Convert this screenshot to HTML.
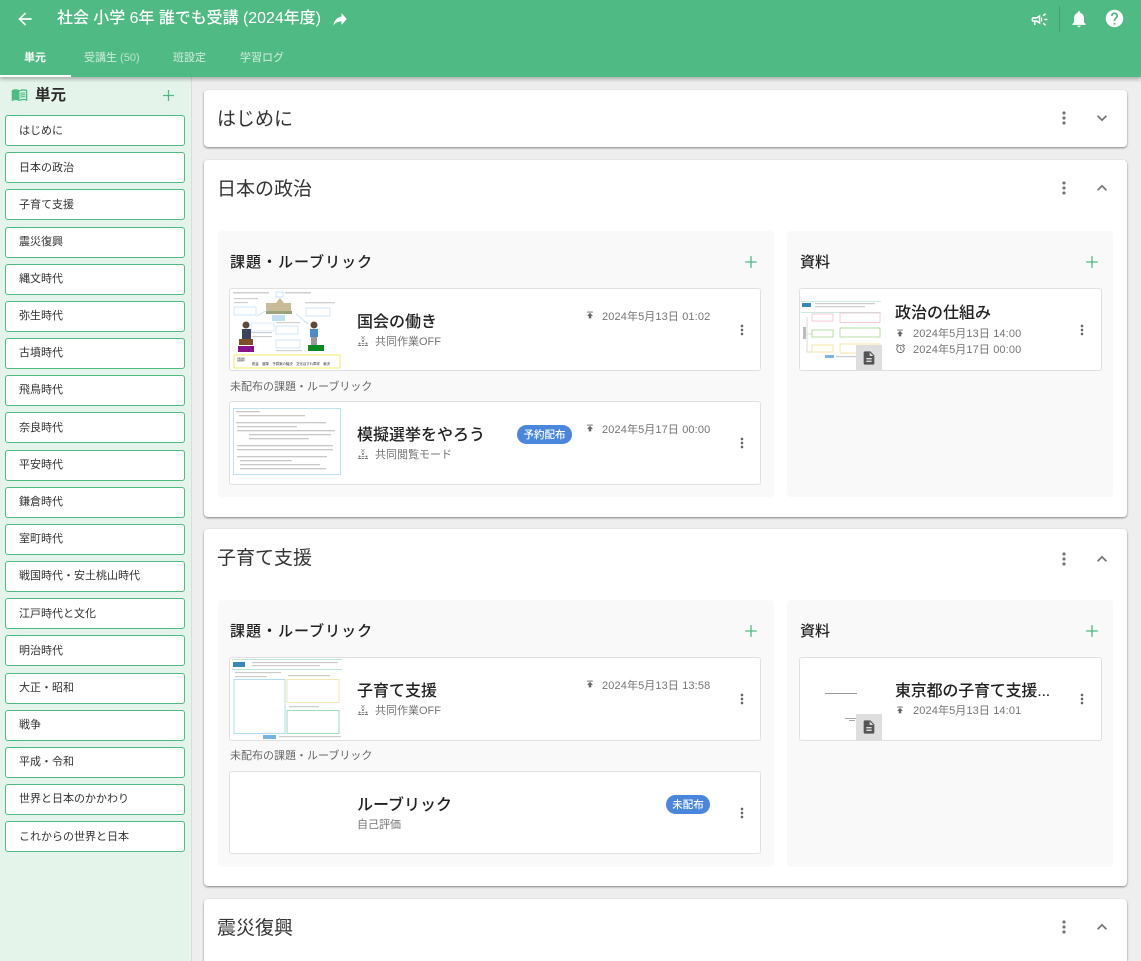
<!DOCTYPE html>
<html lang="ja"><head><meta charset="utf-8"><title>単元</title>
<style>
*{box-sizing:border-box}
html,body{margin:0;padding:0;width:1141px;height:961px;overflow:hidden}
body{position:relative;background:#eeeeee;font-family:"Liberation Sans","Noto Sans CJK JP",sans-serif;color:rgba(0,0,0,.87)}
.a{position:absolute;white-space:nowrap}
.hdr{left:0;top:0;width:1141px;height:77px;background:#4fba83;box-shadow:0 2px 4px rgba(0,0,0,.3);z-index:5}
.tab{top:51px;font-size:11px;line-height:14px;color:rgba(255,255,255,.62);font-weight:500}
.side{left:0;top:77px;width:192px;height:884px;background:#e4f4ea;border-right:1px solid #dcdcdc}
.si{left:5px;width:180px;height:31px;background:#fff;border:1px solid #4fba83;border-radius:3px;font-size:11px;line-height:30px;padding-left:13px;color:#333}
.u{line-height:28px}
.card{left:204px;width:923px;background:#fff;border-radius:4px;box-shadow:0 1px 2px rgba(0,0,0,.45)}
.ct{left:217px;margin-top:2px;font-size:19px;line-height:26px;color:#333}
.panel{background:#f9f9f9;border-radius:4px}
.st{margin-top:1px;font-size:15px;font-weight:500;line-height:20px;letter-spacing:1px;color:#222}
.item{background:#fff;border:1px solid #e0e0e0;border-radius:3px;overflow:hidden}
.it{margin-top:2px;font-size:16px;font-weight:500;line-height:22px;color:#222}
.sub{margin-top:1px;font-size:11px;line-height:14px;color:#757575}
.d{letter-spacing:.12px}
.lbl{left:230px;margin-top:1px;font-size:11px;line-height:14px;color:#666}
.badge{background:#4a86dc;color:#fff;border-radius:10px;font-size:10.5px;font-weight:500;text-align:center;line-height:20px;height:19px}
svg.i{position:absolute;display:block}
.thumb{position:absolute}
.docbg{position:absolute;background:#dedede;width:26px;height:26px}
text{font-family:"Liberation Sans","Noto Sans CJK JP",sans-serif}
</style></head><body>
<svg width="0" height="0" style="position:absolute"><defs>
<symbol id="back" viewBox="0 0 24 24"><path d="M20 11H7.830l5.590-5.590L12 4l-8 8 8 8 1.410-1.410L7.830 13H20v-2z"/></symbol>
<symbol id="share" viewBox="0 0 24 24"><path d="M14 9V5l7 7-7 7v-4.100c-5 0-8.500 1.600-11 5.100 1-5 4-10 11-11z"/></symbol>
<symbol id="camp" viewBox="0 0 24 24"><path d="M18 11v2h4v-2h-4zm-2 6.610c.96.71 2.210 1.650 3.200 2.390.4-.53.8-1.070 1.200-1.600-.99-.74-2.240-1.680-3.200-2.400-.4.54-.8 1.080-1.200 1.610zM20.400 5.600c-.4-.53-.8-1.070-1.200-1.600-.99.74-2.240 1.680-3.200 2.400.4.53.8 1.070 1.200 1.600.96-.72 2.210-1.650 3.200-2.400zM4 9c-1.100 0-2 .9-2 2v2c0 1.100.9 2 2 2h1v4h2v-4h1l5 3V6L8 9H4zm5.030 1.710L11 9.530v4.940l-1.970-1.180-.48-.29H4v-2h4.550l.48-.29zM15.500 12c0-1.330-.58-2.530-1.500-3.350v6.690c.92-.81 1.500-2.010 1.500-3.340z"/></symbol>
<symbol id="bell" viewBox="0 0 24 24"><path d="M12 22c1.100 0 2-.9 2-2h-4c0 1.100.89 2 2 2zm6-6v-5c0-3.070-1.640-5.640-4.500-6.320V4c0-.83-.67-1.500-1.500-1.500s-1.500.67-1.500 1.500v.68C7.630 5.360 6 7.920 6 11v5l-2 2v1h16v-1l-2-2z"/></symbol>
<symbol id="help" viewBox="0 0 24 24"><path d="M12 2C6.480 2 2 6.480 2 12s4.480 10 10 10 10-4.480 10-10S17.520 2 12 2zm1 17h-2v-2h2v2zm2.070-7.750l-.9.92C13.450 12.900 13 13.500 13 15h-2v-.5c0-1.100.45-2.100 1.170-2.830l1.240-1.260c.37-.36.59-.86.59-1.410 0-1.100-.9-2-2-2s-2 .9-2 2H8c0-2.210 1.790-4 4-4s4 1.790 4 4c0 .88-.36 1.680-.93 2.250z"/></symbol>
<symbol id="more" viewBox="0 0 24 24"><path d="M12 8c1.100 0 2-.9 2-2s-.9-2-2-2-2 .9-2 2 .9 2 2 2zm0 2c-1.100 0-2 .9-2 2s.9 2 2 2 2-.9 2-2-.9-2-2-2zm0 6c-1.100 0-2 .9-2 2s.9 2 2 2 2-.9 2-2-.9-2-2-2z"/></symbol>
<symbol id="down" viewBox="0 0 24 24"><path d="M16.590 8.590L12 13.170 7.410 8.590 6 10l6 6 6-6z"/></symbol>
<symbol id="up" viewBox="0 0 24 24"><path d="M12 8l-6 6 1.410 1.410L12 10.830l4.590 4.580L18 14z"/></symbol>
<symbol id="add" viewBox="0 0 24 24"><path d="M19 12.800h-6.200V19h-1.600v-6.200H5v-1.600h6.200V5h1.600v6.200H19z"/></symbol>
<symbol id="pub" viewBox="0 0 24 24"><path d="M5 4v2h14V4H5zm0 10h4v6h6v-6h4l-7-7-7 7z"/></symbol>
<symbol id="alarm" viewBox="0 0 24 24"><path d="M22 5.720l-4.600-3.860-1.290 1.530 4.600 3.860L22 5.720zM7.880 3.390L6.600 1.860 2 5.710l1.290 1.530 4.590-3.850zM12.500 8H11v6l4.750 2.850.75-1.230-4-2.370V8zM12 4c-4.970 0-9 4.030-9 9s4.020 9 9 9c4.970 0 9-4.030 9-9s-4.030-9-9-9zm0 16c-3.870 0-7-3.130-7-7s3.130-7 7-7 7 3.130 7 7-3.130 7-7 7z"/></symbol>
<symbol id="doc" viewBox="0 0 24 24"><path d="M14 2H6c-1.100 0-1.990.9-1.990 2L4 20c0 1.100.89 2 1.990 2H18c1.100 0 2-.9 2-2V8l-6-6zm2 16H8v-2h8v2zm0-4H8v-2h8v2zm-3-5V3.500L18.500 9H13z"/></symbol>
<symbol id="book" viewBox="0 0 24 24"><path d="M21 5c-1.110-.35-2.330-.5-3.500-.5-1.950 0-4.050.4-5.500 1.500-1.450-1.100-3.550-1.500-5.500-1.500S2.450 4.900 1 6v14.650c0 .25.25.5.5.5.1 0 .15-.05.25-.05C3.100 20.450 5.050 20 6.500 20c1.950 0 4.050.4 5.500 1.500 1.350-.85 3.800-1.500 5.500-1.500 1.650 0 3.350.3 4.750 1.050.1.05.15.05.25.05.25 0 .5-.25.5-.5V6c-.6-.45-1.250-.75-2-1zm0 13.500c-1.100-.35-2.300-.5-3.500-.5-1.700 0-4.150.65-5.500 1.500V8c1.350-.85 3.800-1.500 5.500-1.500 1.200 0 2.400.15 3.500.5v11.500zM17.500 10.500c.88 0 1.730.09 2.500.26V9.240c-.79-.15-1.640-.24-2.500-.24-1.700 0-3.240.29-4.500.83v1.660c1.130-.64 2.700-.99 4.500-.99zM13 12.490v1.660c1.130-.64 2.700-.99 4.500-.99.88 0 1.730.09 2.500.26V11.900c-.79-.15-1.640-.24-2.500-.24-1.700 0-3.240.3-4.500.83zM17.500 14.330c-1.700 0-3.240.29-4.500.83v1.660c1.130-.64 2.700-.99 4.500-.99.88 0 1.730.09 2.500.26v-1.520c-.79-.16-1.640-.24-2.500-.24z"/></symbol>
<symbol id="grp" viewBox="0 0 24 24"><path d="M9 2l3 2.500L15 2h1.500l-3.700 3.200V6l3.700 3H15l-3-2.500L9 9H7.500l3.700-3v-.8L7.500 2zM12 10a2 2 0 1 1 0 4 2 2 0 0 1 0-4zM5 15a2 2 0 1 1 0 4 2 2 0 0 1 0-4zM19 15a2 2 0 1 1 0 4 2 2 0 0 1 0-4zM2 20h6v2H2zM9 16h6v1.500H9zM9.500 20h5v2h-5zM16 20h6v2h-6z"/></symbol>
</defs></svg>

<div class="a hdr"></div>
<div style="position:absolute;left:0;top:0;width:1141px;height:77px;z-index:6">
<svg class="i" style="left:15px;top:9px;fill:#fff" width="20" height="20"><use href="#back"/></svg>
<div class="a" style="left:57px;top:8px;font-size:15.95px;font-weight:500;line-height:22px;color:#fff">社会 小学 6年 誰でも受講 (2024年度)</div>
<svg class="i" style="left:331px;top:9px;fill:#fff" width="18" height="20" viewBox="0 0 24 24" preserveAspectRatio="none"><use href="#share" width="24" height="24"/></svg>
<svg class="i" style="left:1030px;top:10px;fill:#fff" width="19" height="19"><use href="#camp"/></svg>
<div class="a" style="left:1059px;top:6px;width:1px;height:26px;background:rgba(0,0,0,.14)"></div>
<svg class="i" style="left:1069px;top:9px;fill:#fff" width="20" height="20"><use href="#bell"/></svg>
<svg class="i" style="left:1104px;top:8px;fill:#fff" width="21" height="21"><use href="#help"/></svg>
<div class="a tab" style="left:24px;color:#fff;font-weight:700">単元</div>
<div class="a tab" style="left:84px">受講生 (50)</div>
<div class="a tab" style="left:173px">班設定</div>
<div class="a tab" style="left:240px">学習ログ</div>
<div class="a" style="left:0;top:75px;width:71px;height:2px;background:#fff"></div>
</div>

<div class="a side"></div>
<svg class="i" style="left:11px;top:86px;fill:#4fba83" width="17" height="17"><use href="#book"/></svg>
<div class="a" style="left:35px;top:85px;font-size:15.5px;font-weight:700;line-height:22px;color:#2b2b2b">単元</div>
<svg class="i" style="left:159px;top:86px;fill:#4fba83" width="19" height="19"><use href="#add"/></svg>
<div class="a si" style="top:115px">はじめに</div>
<div class="a si" style="top:152px">日本の政治</div>
<div class="a si" style="top:189px">子育て支援</div>
<div class="a si u" style="top:227px">震災復興</div>
<div class="a si u" style="top:264px">縄文時代</div>
<div class="a si u" style="top:301px">弥生時代</div>
<div class="a si u" style="top:338px">古墳時代</div>
<div class="a si u" style="top:375px">飛鳥時代</div>
<div class="a si" style="top:412px">奈良時代</div>
<div class="a si u" style="top:450px">平安時代</div>
<div class="a si u" style="top:487px">鎌倉時代</div>
<div class="a si u" style="top:524px">室町時代</div>
<div class="a si u" style="top:561px">戦国時代・安土桃山時代</div>
<div class="a si" style="top:598px">江戸時代と文化</div>
<div class="a si" style="top:635px">明治時代</div>
<div class="a si u" style="top:673px">大正・昭和</div>
<div class="a si u" style="top:710px">戦争</div>
<div class="a si u" style="top:747px">平成・令和</div>
<div class="a si u" style="top:784px">世界と日本のかかわり</div>
<div class="a si" style="top:821px">これからの世界と日本</div>

<!-- card 1 -->
<div class="a card" style="top:90px;height:57px"></div>
<div class="a ct" style="top:105px">はじめに</div>
<svg class="i" style="left:1054px;top:108px;fill:#757575" width="20" height="20"><use href="#more"/></svg>
<svg class="i" style="left:1092px;top:108px;fill:#757575" width="20" height="20"><use href="#down"/></svg>

<!-- card 2 -->
<div class="a card" style="top:160px;height:357px"></div>
<div class="a ct" style="top:175px">日本の政治</div>
<svg class="i" style="left:1054px;top:178px;fill:#757575" width="20" height="20"><use href="#more"/></svg>
<svg class="i" style="left:1092px;top:178px;fill:#757575" width="20" height="20"><use href="#up"/></svg>
<div class="a panel" style="left:218px;top:231px;width:556px;height:266px"></div>
<div class="a panel" style="left:787px;top:231px;width:326px;height:266px"></div>
<div class="a st" style="left:230px;top:252px">課題・ルーブリック</div>
<svg class="i" style="left:741px;top:252px;fill:#4fba83" width="20" height="20"><use href="#add"/></svg>
<div class="a st" style="left:800px;top:252px;letter-spacing:0">資料</div>
<svg class="i" style="left:1082px;top:252px;fill:#4fba83" width="20" height="20"><use href="#add"/></svg>

<div class="a item" style="left:229px;top:288px;width:532px;height:83px"></div>
<svg class="thumb" style="left:232px;top:290px" width="110" height="80" viewBox="0 0 110 80">
<g fill="#cfcfcf"><rect x="1" y="2" width="36" height="1.500"/><rect x="53" y="2" width="26" height="1.500"/><rect x="2" y="8" width="24" height="1.200"/><rect x="2" y="12" width="14" height="1.200"/><rect x="73" y="12" width="30" height="1.300"/><rect x="44" y="32" width="24" height="1.200"/><rect x="18" y="42" width="22" height="1.200"/><rect x="20" y="46" width="20" height="1.200"/><rect x="44" y="60" width="26" height="1.200"/></g>
<rect x="44" y="2" width="7" height="5" fill="#fff" stroke="#b5d9ef" stroke-width=".7"/>
<rect x="2" y="17" width="22" height="8" fill="#fff" stroke="#bcdcf0" stroke-width=".7"/>
<path d="M44 13l4-5 4 5h7v8H34v-8z" fill="#c9bb98"/><rect x="34" y="21" width="26" height="3" fill="#9aa37c"/>
<rect x="40" y="25" width="13" height="6" fill="#bfe0ee"/>
<rect x="74" y="18" width="24" height="8" fill="#fff" stroke="#bcdcf0" stroke-width=".7"/>
<path d="M25 26l10-6M64 24l12 10" stroke="#c7e2f3" stroke-width="1" fill="none"/>
<rect x="19" y="33" width="23" height="8" fill="#fff" stroke="#cfe4f4" stroke-width=".7"/>
<rect x="44" y="36" width="22" height="8" fill="#fff" stroke="#bcdcf0" stroke-width=".7"/>
<rect x="44" y="50" width="24" height="8" fill="#fff" stroke="#bcdcf0" stroke-width=".7"/>
<circle cx="14" cy="35" r="3.500" fill="#5c4a3c"/><rect x="10" y="39" width="9" height="10" fill="#39435e"/><rect x="7" y="49" width="14" height="6" fill="#7c4f2a"/>
<rect x="6" y="56" width="16" height="6" fill="#8a128a"/>
<circle cx="82" cy="35" r="3.500" fill="#5c4a3c"/><rect x="78" y="39" width="8" height="8" fill="#4a8bc8"/><rect x="79" y="47" width="6" height="8" fill="#999"/>
<rect x="76" y="55" width="16" height="6" fill="#0b8a24"/>
<rect x="2" y="65" width="106" height="13" fill="#fff" stroke="#f3e65b" stroke-width=".9"/>
<text x="5" y="71" font-size="4" fill="#333">語群</text><text x="20" y="75" font-size="3.400" fill="#333">税金　選挙　予算案の議決　文化ぼすれ軍球　裁決</text>
</svg>
<div class="a it" style="left:357px;top:310px">国会の働き</div>
<svg class="i" style="left:357px;top:335px;fill:#777" width="12" height="12"><use href="#grp"/></svg>
<div class="a sub" style="left:375px;top:334px">共同作業OFF</div>
<svg class="i" style="left:585px;top:310px;fill:#666" width="10" height="10"><use href="#pub"/></svg>
<div class="a sub d" style="left:602px;top:309px">2024年5月13日 01:02</div>
<svg class="i" style="left:734px;top:322px;fill:#666" width="16" height="16"><use href="#more"/></svg>

<div class="a lbl" style="top:379px">未配布の課題・ルーブリック</div>

<div class="a item" style="left:229px;top:401px;width:532px;height:84px"></div>
<svg class="thumb" style="left:233px;top:408px" width="108" height="67" viewBox="0 0 108 67">
<rect x=".5" y=".5" width="107" height="66" fill="#fff" stroke="#bfe3ee"/>
<g fill="#c8c8c8"><rect x="3" y="3" width="24" height="1.300"/><rect x="6" y="7" width="66" height="1.300"/><rect x="3" y="14" width="90" height="1.300"/><rect x="4" y="18" width="60" height="1.300"/><rect x="4" y="22" width="98" height="1.300"/><rect x="16" y="26" width="82" height="1.300"/><rect x="16" y="30" width="60" height="1.300"/><rect x="4" y="37" width="96" height="1.300"/><rect x="4" y="41" width="96" height="1.300"/><rect x="4" y="48" width="90" height="1.300"/><rect x="7" y="52" width="52" height="1.300"/><rect x="7" y="56" width="80" height="1.300"/><rect x="7" y="60" width="86" height="1.300"/></g>
</svg>
<div class="a it" style="left:357px;top:423px">模擬選挙をやろう</div>
<svg class="i" style="left:357px;top:448px;fill:#777" width="12" height="12"><use href="#grp"/></svg>
<div class="a sub" style="left:375px;top:447px">共同閲覧モード</div>
<div class="a badge" style="left:517px;top:425px;width:55px">予約配布</div>
<svg class="i" style="left:585px;top:423px;fill:#666" width="10" height="10"><use href="#pub"/></svg>
<div class="a sub d" style="left:602px;top:422px">2024年5月17日 00:00</div>
<svg class="i" style="left:734px;top:435px;fill:#666" width="16" height="16"><use href="#more"/></svg>

<div class="a item" style="left:799px;top:288px;width:303px;height:83px"></div>
<svg class="thumb" style="left:801px;top:300px" width="82" height="70" viewBox="0 0 82 70">
<rect x="0" y="1" width="80" height=".8" fill="#bfe6d4"/><rect x="0" y="12" width="80" height=".8" fill="#bfe6d4"/>
<rect x="1" y="3" width="9" height="4" fill="#3a87bb"/><rect x="14" y="3" width="60" height="1.200" fill="#ccc"/><rect x="14" y="6" width="50" height="1.200" fill="#ccc"/>
<path d="M6 17v35h5M6 34h5" stroke="#ccc" stroke-width=".7" fill="none"/><rect x="2" y="27" width="3" height="12" fill="#bbb"/>
<rect x="11" y="14" width="21" height="7" fill="#fff" stroke="#f2bfd0" stroke-width=".8"/><rect x="39" y="13" width="40" height="9.500" fill="#fff" stroke="#f2bfd0" stroke-width=".8"/>
<rect x="11" y="30" width="21" height="7" fill="#fff" stroke="#a8d490" stroke-width=".8"/><rect x="39" y="28" width="40" height="9" fill="#fff" stroke="#a8d490" stroke-width=".8"/>
<rect x="11" y="45" width="21" height="7" fill="#fff" stroke="#f3e08c" stroke-width=".8"/><rect x="39" y="44" width="40" height="9" fill="#fff" stroke="#f3e08c" stroke-width=".8"/>
<rect x="24" y="55" width="9" height="3" fill="#7fb5e3"/><rect x="35" y="56" width="26" height="1.200" fill="#ccc"/>
</svg>
<div class="docbg" style="left:856px;top:345px"></div>
<svg class="i" style="left:861px;top:349px;fill:#555" width="16" height="18"><use href="#doc"/></svg>
<div class="a it" style="left:895px;top:301px">政治の仕組み</div>
<svg class="i" style="left:895px;top:328px;fill:#666" width="10" height="10"><use href="#pub"/></svg>
<div class="a sub d" style="left:913px;top:327px;margin-top:0">2024年5月13日 14:00</div>
<svg class="i" style="left:895px;top:343px;fill:#666" width="11" height="11"><use href="#alarm"/></svg>
<div class="a sub d" style="left:913px;top:342px">2024年5月17日 00:00</div>
<svg class="i" style="left:1074px;top:322px;fill:#666" width="16" height="16"><use href="#more"/></svg>

<!-- card 3 -->
<div class="a card" style="top:529px;height:357px"></div>
<div class="a ct" style="top:544px">子育て支援</div>
<svg class="i" style="left:1054px;top:549px;fill:#757575" width="20" height="20"><use href="#more"/></svg>
<svg class="i" style="left:1092px;top:549px;fill:#757575" width="20" height="20"><use href="#up"/></svg>
<div class="a panel" style="left:218px;top:600px;width:556px;height:267px"></div>
<div class="a panel" style="left:787px;top:600px;width:326px;height:267px"></div>
<div class="a st" style="left:230px;top:621px">課題・ルーブリック</div>
<svg class="i" style="left:741px;top:621px;fill:#4fba83" width="20" height="20"><use href="#add"/></svg>
<div class="a st" style="left:800px;top:621px;letter-spacing:0">資料</div>
<svg class="i" style="left:1082px;top:621px;fill:#4fba83" width="20" height="20"><use href="#add"/></svg>

<div class="a item" style="left:229px;top:657px;width:532px;height:84px"></div>
<svg class="thumb" style="left:232px;top:658px" width="111" height="82" viewBox="0 0 111 82">
<rect x="0" y="1" width="110" height="1" fill="#bfe6d4"/><rect x="0" y="11" width="110" height="1" fill="#bfe6d4"/>
<rect x="1" y="4" width="12" height="5" fill="#3a87bb"/><rect x="20" y="4" width="86" height="1.200" fill="#ccc"/><rect x="20" y="7" width="68" height="1.200" fill="#ccc"/>
<rect x="3" y="14" width="46" height="1.200" fill="#ccc"/><rect x="3" y="18" width="32" height="1.200" fill="#ccc"/>
<rect x="2" y="21.500" width="51" height="54" fill="#fff" stroke="#a9d9f0" stroke-width=".9"/>
<rect x="56" y="17" width="42" height="1.200" fill="#ccc"/>
<rect x="55" y="21.500" width="52" height="23" fill="#fff" stroke="#f2e3ac" stroke-width=".9"/>
<rect x="57" y="48" width="30" height="1.200" fill="#ccc"/>
<rect x="55" y="52.500" width="52" height="23" fill="#fff" stroke="#9ad6b4" stroke-width=".9"/>
<rect x="31" y="77" width="13" height="4" fill="#74b2e2"/><rect x="47" y="78" width="62" height="1.200" fill="#ccc"/>
</svg>
<div class="a it" style="left:357px;top:679px">子育て支援</div>
<svg class="i" style="left:357px;top:704px;fill:#777" width="12" height="12"><use href="#grp"/></svg>
<div class="a sub" style="left:375px;top:703px">共同作業OFF</div>
<svg class="i" style="left:585px;top:679px;fill:#666" width="10" height="10"><use href="#pub"/></svg>
<div class="a sub d" style="left:602px;top:678px">2024年5月13日 13:58</div>
<svg class="i" style="left:734px;top:691px;fill:#666" width="16" height="16"><use href="#more"/></svg>

<div class="a lbl" style="top:748px">未配布の課題・ルーブリック</div>

<div class="a item" style="left:229px;top:771px;width:532px;height:83px"></div>
<div class="a it" style="left:357px;top:793px">ルーブリック</div>
<div class="a sub" style="left:357px;top:817px">自己評価</div>
<div class="a badge" style="left:666px;top:795px;width:44px">未配布</div>
<svg class="i" style="left:734px;top:805px;fill:#666" width="16" height="16"><use href="#more"/></svg>

<div class="a item" style="left:799px;top:657px;width:303px;height:84px"></div>
<svg class="thumb" style="left:801px;top:660px" width="60" height="70" viewBox="0 0 60 70">
<rect x="24" y="33" width="32" height="1" fill="#999"/><rect x="44" y="58" width="14" height="1" fill="#aaa"/><rect x="48" y="60" width="6" height="1" fill="#aaa"/>
</svg>
<div class="docbg" style="left:856px;top:714px"></div>
<svg class="i" style="left:861px;top:718px;fill:#555" width="16" height="18"><use href="#doc"/></svg>
<div class="a it" style="left:895px;top:679px;width:156px;overflow:hidden;letter-spacing:-.2px">東京都の子育て支援...</div>
<svg class="i" style="left:895px;top:705px;fill:#666" width="10" height="10"><use href="#pub"/></svg>
<div class="a sub d" style="left:913px;top:703px">2024年5月13日 14:01</div>
<svg class="i" style="left:1074px;top:691px;fill:#666" width="16" height="16"><use href="#more"/></svg>

<!-- card 4 -->
<div class="a card" style="top:899px;height:62px;border-radius:4px 4px 0 0"></div>
<div class="a ct" style="top:914px">震災復興</div>
<svg class="i" style="left:1054px;top:917px;fill:#757575" width="20" height="20"><use href="#more"/></svg>
<svg class="i" style="left:1092px;top:917px;fill:#757575" width="20" height="20"><use href="#up"/></svg>
</body></html>
